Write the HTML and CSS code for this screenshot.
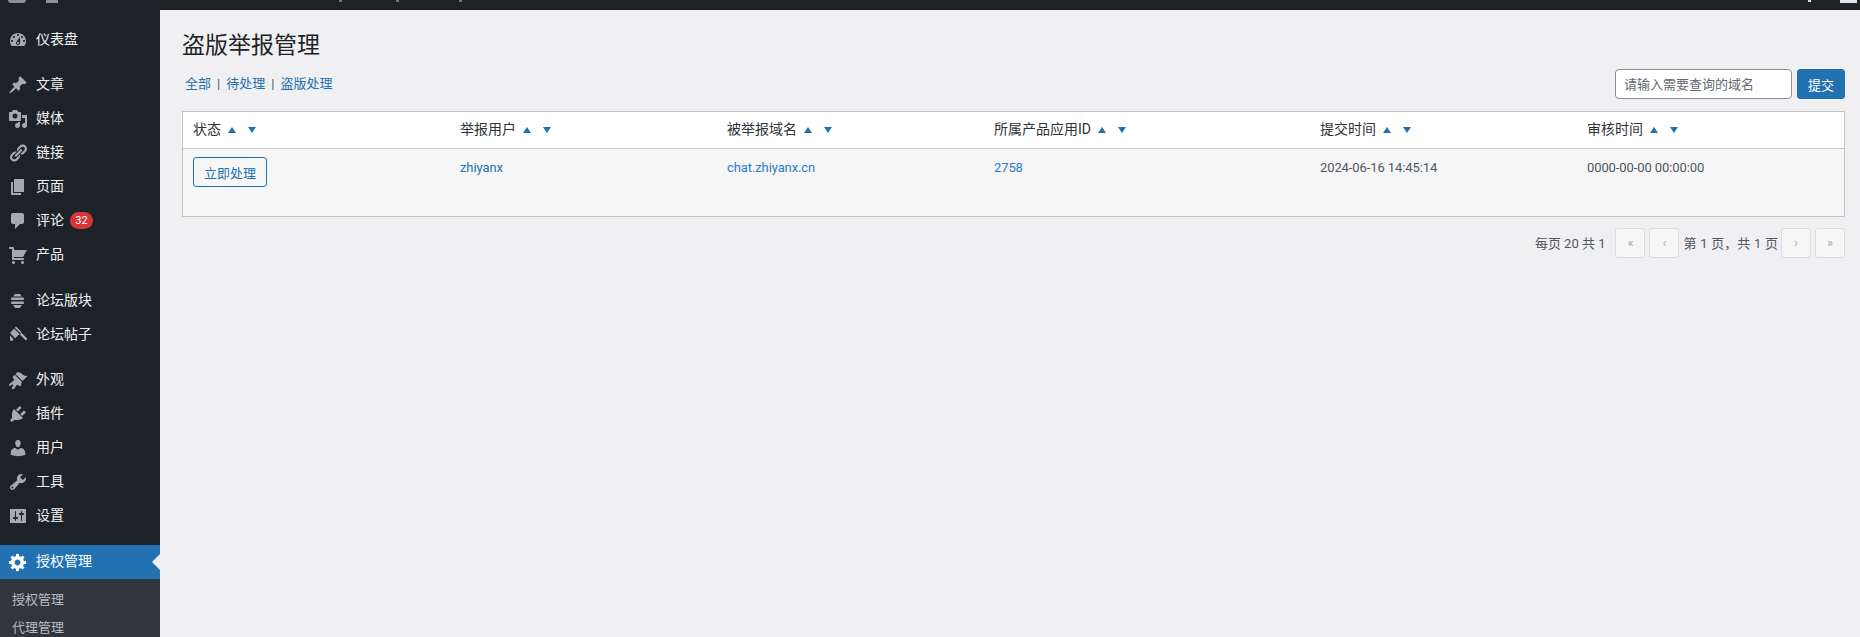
FILE: index.html
```html
<!DOCTYPE html>
<html lang="zh-CN">
<head>
<meta charset="utf-8">
<title>盗版举报管理</title>
<link rel="stylesheet" href="styles.css">
</head>
<body>
<div class="adminbar">
  <span class="bar-mark bar-logo"></span>
  <span class="bar-mark bar-home"></span>
  <span class="bar-mark bar-tick bar-a"></span>
  <span class="bar-mark bar-tick bar-b"></span>
  <span class="bar-mark bar-tick bar-c"></span>
  <span class="bar-spacer"></span>
  <span class="bar-mark bar-tick bar-d"></span>
  <span class="bar-mark bar-avatar"></span>
</div>
<div class="layout">
  <nav class="sidebar">
    <ul class="menu">
      <li class="item"><svg class="icon" viewBox="0 0 20 20"><path d="M3.76 16h12.48c1.1-1.37 1.76-3.11 1.76-5 0-4.42-3.58-8-8-8s-8 3.58-8 8c0 1.89.66 3.63 1.76 5zM10 4c.55 0 1 .45 1 1s-.45 1-1 1-1-.45-1-1 .45-1 1-1zM6 6c.55 0 1 .45 1 1s-.45 1-1 1-1-.45-1-1 .45-1 1-1zm8 0c.55 0 1 .45 1 1s-.45 1-1 1-1-.45-1-1 .45-1 1-1zm-5.37 5.55L12 7v6c0 1.1-.9 2-2 2s-2-.9-2-2c0-.57.24-1.08.63-1.45zM4 10c.55 0 1 .45 1 1s-.45 1-1 1-1-.45-1-1 .45-1 1-1zm12 0c.55 0 1 .45 1 1s-.45 1-1 1-1-.45-1-1 .45-1 1-1zm-5 3c0-.55-.45-1-1-1s-1 .45-1 1 .45 1 1 1 1-.45 1-1z" fill-rule="evenodd"/></svg><span>仪表盘</span></li>
      <li class="sep"></li>
      <li class="item"><svg class="icon" viewBox="0 0 20 20"><path d="M10.44 3.02l1.82-1.82 6.36 6.35-1.83 1.82c-1.05-.68-2.48-.57-3.41.36l-.75.75c-.92.93-1.04 2.35-.35 3.41l-1.83 1.82-2.41-2.41-2.8 2.79c-.42.42-3.38 2.71-3.8 2.29s1.86-3.39 2.28-3.81l2.79-2.79L4.1 9.36l1.83-1.82c1.05.69 2.48.57 3.4-.36l.75-.75c.93-.92 1.05-2.35.36-3.41z"/></svg><span>文章</span></li>
      <li class="item"><svg class="icon" viewBox="0 0 20 20"><path d="M13 11V4c0-.55-.45-1-1-1h-1.67L9 1H5L3.67 3H2c-.55 0-1 .45-1 1v7c0 .55.45 1 1 1h10c.55 0 1-.45 1-1zM7 4.5c1.38 0 2.5 1.12 2.5 2.5S8.38 9.5 7 9.5 4.5 8.38 4.5 7 5.62 4.5 7 4.5zM14 6h5v10.5c0 1.38-1.12 2.5-2.5 2.5S14 17.88 14 16.5s1.12-2.5 2.5-2.5c.17 0 .34.02.5.05V9h-3V6zm-4 8.05V13h2v3.5c0 1.38-1.12 2.5-2.5 2.5S7 17.88 7 16.5 8.12 14 9.5 14c.17 0 .34.02.5.05z" fill-rule="evenodd"/></svg><span>媒体</span></li>
      <li class="item"><svg class="icon" viewBox="0 0 20 20"><path d="M17.74 2.76c1.68 1.69 1.68 4.41 0 6.1l-1.53 1.52c-1.12 1.12-2.7 1.47-4.14 1.09l2.62-2.61.76-.77.76-.76c.84-.84.84-2.2 0-3.04-.84-.85-2.2-.85-3.04 0l-.77.76-3.38 3.38c-.37-1.44-.02-3.02 1.1-4.14l1.52-1.53c1.69-1.68 4.42-1.68 6.1 0zM8.59 13.43l5.34-5.34c.42-.42.42-1.1 0-1.52-.44-.43-1.13-.39-1.53 0l-5.33 5.34c-.42.42-.42 1.1 0 1.52.44.43 1.13.39 1.52 0zm-.76 2.29l4.14-4.15c.38 1.44.03 3.02-1.09 4.14l-1.52 1.53c-1.69 1.68-4.41 1.68-6.1 0-1.68-1.68-1.68-4.42 0-6.1l1.53-1.52c1.12-1.12 2.7-1.47 4.14-1.1l-4.14 4.15c-.85.84-.85 2.2 0 3.05.84.84 2.2.84 3.04 0z"/></svg><span>链接</span></li>
      <li class="item"><svg class="icon" viewBox="0 0 20 20"><path d="M6 15V2h10v13H6zm-1 1h8v2H3V5h2v11z"/></svg><span>页面</span></li>
      <li class="item"><svg class="icon" viewBox="0 0 20 20"><path d="M5 2h9c1.1 0 2 .9 2 2v7c0 1.1-.9 2-2 2h-2l-5 5v-5H5c-1.1 0-2-.9-2-2V4c0-1.1.9-2 2-2z"/></svg><span>评论</span><span class="badge">32</span></li>
      <li class="item"><svg class="icon" viewBox="0 0 20 20"><path d="M6 13h9c.55 0 1 .45 1 1s-.45 1-1 1H5c-.55 0-1-.45-1-1V4H2c-.55 0-1-.45-1-1s.45-1 1-1h3c.55 0 1 .45 1 1v2h13l-4 7H6v1zm-.5 3c.83 0 1.5.67 1.5 1.5S6.33 19 5.5 19 4 18.33 4 17.5 4.67 16 5.5 16zm9 0c.83 0 1.5.67 1.5 1.5s-.67 1.5-1.5 1.5-1.5-.67-1.5-1.5.67-1.5 1.5-1.5z"/></svg><span>产品</span></li>
      <li class="sep sep-wide"></li>
      <li class="item"><svg class="icon" viewBox="0 0 20 20"><path d="M7 3h5l2 2.500H5zM3.800 6.500h11.400c.5 0 .8.600.8 1.250S15.700 9 15.200 9H3.800C3.300 9 3 8.400 3 7.750S3.300 6.500 3.800 6.500zM3.800 10.500h11.400c.5 0 .8.600.8 1.250S15.700 13 15.200 13H3.800C3.300 13 3 12.400 3 11.750S3.300 10.500 3.800 10.500zM5 14h9l-2 3H7z"/></svg><span>论坛版块</span></li>
      <li class="item"><svg class="icon" viewBox="0 0 20 20"><path d="M8 1.500l5.500 5.500-1.200 1.200L6.800 2.700zM6 3.500l5.500 5.500-4.300 4.200L2 8zM11.800 9.500l1.700-1.700 5.200 5.300c.5.500.5 1.200 0 1.700s-1.200.5-1.700 0zM2 10.500l3.500 3.500L5 15.800H2.400L2 15z"/></svg><span>论坛帖子</span></li>
      <li class="sep"></li>
      <li class="item"><svg class="icon" viewBox="0 0 20 20"><path d="M14.480 11.060L7.410 3.990l1.500-1.500c.5-.56 2.300-.47 3.510.32 1.210.8 1.430 1.280 2.910 2.100 1.180.64 2.450 1.260 4.450.85zm-.71.71L6.700 4.700 4.930 6.470c-.39.39-.39 1.020 0 1.410l1.060 1.060c.39.39.39 1.030 0 1.420-.6.6-1.430 1.110-2.210 1.690-.35.26-.7.530-1.010.84C1.430 13.230.4 14.800 1.430 15.830c.41.410 1.020.39 1.410-.03.42-.42 1.280-1.760 1.640-1.410l1.060 1.060c.35.35-1.090 1.210-1.420 1.650-.39.55-.39 1.360.18 1.840.63.56 1.510.23 2.050-.4.69-.83.86-1.530 1.650-2.420l.89-1.100c.35-.35 1.030-.35 1.410 0L11.370 16c.39.39 1.030.39 1.420 0z"/></svg><span>外观</span></li>
      <li class="item"><svg class="icon" viewBox="0 0 20 20"><path d="M13.110 4.360L9.870 7.600 8 5.730l3.240-3.240c.35-.34 1.050-.2 1.560.32.52.51.66 1.210.31 1.550zm-8 1.770l.91-1.120 9.010 9.010-1.190.84c-.71.71-2.630 1.160-3.820 1.160H6.140L4.900 17.260c-.59.59-1.540.59-2.120 0-.59-.58-.59-1.530 0-2.120l1.240-1.240v-3.880c0-1.130.4-3.190 1.090-3.890zm7.260 3.970l3.240-3.240c.34-.35 1.040-.21 1.550.31.52.51.66 1.210.31 1.550l-3.240 3.250z"/></svg><span>插件</span></li>
      <li class="item"><svg class="icon" viewBox="0 0 20 20"><path d="M10 9.250c-2.270 0-2.730-3.440-2.730-3.440C7 4.020 7.820 2 9.970 2c2.160 0 2.980 2.020 2.710 3.810 0 0-.41 3.440-2.680 3.440zm0 2.570L12.720 10c2.390 0 4.520 2.330 4.520 4.530v2.490s-3.650 1.130-7.240 1.130c-3.650 0-7.240-1.130-7.240-1.130v-2.490c0-2.250 1.940-4.480 4.470-4.480z"/></svg><span>用户</span></li>
      <li class="item"><svg class="icon" viewBox="0 0 20 20"><path d="M16.680 9.770c-1.340 1.340-3.300 1.670-4.950.99l-5.410 6.520c-.99.99-2.590.99-3.580 0s-.99-2.590 0-3.570l6.520-5.420c-.68-1.650-.35-3.610.99-4.950 1.280-1.280 3.120-1.620 4.720-1.060l-2.890 2.890 2.820 2.820 2.860-2.870c.53 1.580.18 3.390-1.080 4.650zM3.810 16.210c.4.390 1.040.39 1.430 0 .4-.4.4-1.040 0-1.430-.39-.4-1.030-.4-1.430 0-.39.39-.39 1.030 0 1.430z" fill-rule="evenodd"/></svg><span>工具</span></li>
      <li class="item"><svg class="icon" viewBox="0 0 20 20"><path d="M18 16V4c0-.55-.45-1-1-1H3c-.55 0-1 .45-1 1v12c0 .55.45 1 1 1h14c.55 0 1-.45 1-1zM8 11h1c.55 0 1 .45 1 1s-.45 1-1 1H8v1.500c0 .28-.22.5-.5.5s-.5-.22-.5-.5V13H6c-.55 0-1-.45-1-1s.45-1 1-1h1V5.500c0-.28.22-.5.5-.5s.5.22.5.5V11zm5-2h-1c-.55 0-1-.45-1-1s.45-1 1-1h1V5.500c0-.28.22-.5.5-.5s.5.22.5.5V7h1c.55 0 1 .45 1 1s-.45 1-1 1h-1v5.500c0 .28-.22.5-.5.5s-.5-.22-.5-.5V9z" fill-rule="evenodd"/></svg><span>设置</span></li>
      <li class="sep sep-last"></li>
      <li class="item item-active"><svg class="icon" viewBox="0 0 20 20"><path d="M18 12h-2.180c-.17.7-.44 1.350-.81 1.930l1.540 1.540-2.100 2.100-1.540-1.540c-.58.36-1.230.63-1.910.79V19H8v-2.180c-.68-.16-1.330-.43-1.910-.79l-1.540 1.540-2.120-2.120 1.540-1.540c-.36-.58-.63-1.230-.79-1.910H1V9.030h2.170c.16-.7.44-1.350.8-1.940L2.430 5.550l2.100-2.100 1.540 1.540c.58-.37 1.240-.64 1.930-.81V2h3v2.180c.68.16 1.330.43 1.910.79l1.540-1.540 2.120 2.120-1.540 1.540c.36.59.64 1.240.8 1.940H18V12zm-8.500 1.500c1.660 0 3-1.340 3-3s-1.340-3-3-3-3 1.340-3 3 1.340 3 3 3z" fill-rule="evenodd"/></svg><span>授权管理</span><span class="active-arrow"></span></li>
      <li class="submenu">
        <a class="subitem">授权管理</a>
        <a class="subitem">代理管理</a>
      </li>
    </ul>
  </nav>
  <main class="main">
    <h1 class="title">盗版举报管理</h1>
    <div class="toolbar">
      <div class="filters">
        <a class="link">全部</a><span class="divider">|</span><a class="link">待处理</a><span class="divider">|</span><a class="link">盗版处理</a>
      </div>
      <form class="search">
        <input class="search-input" type="text" placeholder="请输入需要查询的域名">
        <button class="search-btn" type="button">提交</button>
      </form>
    </div>
    <table class="data">
      <colgroup>
        <col class="c1"><col class="c2"><col class="c3"><col class="c4"><col class="c5"><col class="c6">
      </colgroup>
      <thead>
        <tr>
          <th><span class="th-in">状态<i class="up"></i><i class="down"></i></span></th>
          <th><span class="th-in">举报用户<i class="up"></i><i class="down"></i></span></th>
          <th><span class="th-in">被举报域名<i class="up"></i><i class="down"></i></span></th>
          <th><span class="th-in">所属产品应用ID<i class="up"></i><i class="down"></i></span></th>
          <th><span class="th-in">提交时间<i class="up"></i><i class="down"></i></span></th>
          <th><span class="th-in">审核时间<i class="up"></i><i class="down"></i></span></th>
        </tr>
      </thead>
      <tbody>
        <tr>
          <td><button class="action" type="button">立即处理</button></td>
          <td><a class="link">zhiyanx</a></td>
          <td><a class="link link-bright">chat.zhiyanx.cn</a></td>
          <td><a class="link link-bright">2758</a></td>
          <td>2024-06-16 14:45:14</td>
          <td>0000-00-00 00:00:00</td>
        </tr>
      </tbody>
    </table>
    <div class="pager">
      <span class="pager-count">每页 20 共 1</span>
      <span class="page-btn">«</span>
      <span class="page-btn">‹</span>
      <span class="pager-info">第 1 页，共 1 页</span>
      <span class="page-btn">›</span>
      <span class="page-btn">»</span>
    </div>
  </main>
</div>
</body>
</html>
```
FILE: styles.css
```css
* { box-sizing: border-box; }
html, body { height: 100%; }
body {
  margin: 0;
  overflow: hidden;
  background: #f0f0f2;
  color: #3c434a;
  font: 13px/1.4 Roboto, "Noto Sans CJK SC", sans-serif;
}
.adminbar {
  height: 10px;
  background: #1d2327;
  display: flex;
  align-items: flex-start;
  overflow: hidden;
}
.bar-mark { display: block; background: #8c8f94; }
.bar-logo { width: 18px; height: 3px; margin-left: 8px; border-radius: 0 0 9px 9px; }
.bar-home { width: 12px; height: 3px; margin-left: 20px; }
.bar-tick { width: 3px; height: 2px; background: #6f7378; }
.bar-a { margin-left: 281px; }
.bar-b { margin-left: 54px; }
.bar-c { margin-left: 60px; }
.bar-spacer { flex: 1; }
.bar-d { background: #d8d8d8; margin-right: 29px; }
.bar-avatar { width: 17px; height: 3px; margin-right: 3px; background: #dce4ee; }

.layout { display: flex; height: 627px; }
.sidebar { width: 160px; flex: none; background: #1d2229; overflow: hidden; }
.menu { list-style: none; margin: 0; padding: 12px 0 0; }
.item {
  height: 34px;
  display: flex;
  align-items: center;
  padding: 1px 0 0 8px;
  color: #f0f0f1;
  font-size: 14px;
  position: relative;
}
.icon { width: 20px; height: 20px; flex: none; margin-right: 8px; fill: #a7aaad; }
.sep { height: 11px; }
.sep-wide { height: 12px; }
.sep-last { height: 13px; }
.badge {
  margin-left: 6px;
  min-width: 23px;
  height: 17px;
  border-radius: 9px;
  background: #d63638;
  color: #fff;
  font-size: 11px;
  line-height: 17px;
  text-align: center;
}
.item-active { background: #2271b1; color: #fff; padding-top: 0; }
.item-active .icon { fill: #fff; }
.active-arrow {
  position: absolute;
  right: 0;
  top: 9px;
  border: 8px solid transparent;
  border-left: 0;
  border-right-color: #f0f0f2;
}
.submenu { background: #32363c; padding: 7px 0 0; height: 80px; display: flex; flex-direction: column; }
.subitem { display: block; height: 28px; line-height: 28px; padding-left: 12px; color: #b8bbc0; font-size: 13px; }

.main { flex: 1; min-width: 0; padding: 21px 15px 0 22px; }
.title { margin: 0; font-size: 23px; font-weight: 400; line-height: 29px; color: #1d2327; }
.toolbar { display: flex; justify-content: space-between; align-items: center; height: 30px; margin-top: 9px; }
.filters { padding-left: 3px; display: flex; align-items: center; }
.link { color: #2271b1; text-decoration: none; }
.link-bright { color: #2a7ccc; }
.divider { margin: 0 6px; color: #50575e; }
.search { display: flex; gap: 5px; margin: 0; }
.search-input {
  width: 177px;
  height: 30px;
  padding: 0 8px;
  border: 1px solid #8c8f94;
  border-radius: 4px;
  background: #fff;
  font: 13px Roboto, "Noto Sans CJK SC", sans-serif;
  color: #2c3338;
}
.search-input::placeholder { color: #646970; opacity: 1; }
.search-btn {
  width: 48px;
  height: 30px;
  border: 1px solid #2271b1;
  border-radius: 3px;
  background: #2271b1;
  color: #fff;
  padding: 0;
  font: 13px Roboto, "Noto Sans CJK SC", sans-serif;
}
.data {
  width: 100%;
  margin-top: 12px;
  border: 1px solid #c3c4c7;
  border-collapse: separate;
  border-spacing: 0;
  table-layout: fixed;
}
.c1, .c2, .c3, .c5 { width: 267px; }
.c4 { width: 326px; }
.data th {
  height: 37px;
  padding: 0 10px;
  background: #fff;
  border-bottom: 1px solid #c3c4c7;
  font-weight: 400;
  font-size: 14px;
  text-align: left;
  color: #2c3338;
}
.th-in { display: flex; align-items: center; }
.up, .down { display: block; width: 0; height: 0; border-left: 4px solid transparent; border-right: 4px solid transparent; }
.up { margin-left: 7px; border-bottom: 6px solid #2271b1; }
.down { margin-left: 12px; border-top: 6px solid #2271b1; }
.data td {
  height: 67px;
  padding: 9px 10px 0;
  background: #f6f6f7;
  vertical-align: top;
  color: #50575e;
  line-height: 20px;
  letter-spacing: -0.1px;
}
.data td:first-child { padding-top: 8px; }
.action {
  display: block;
  width: 74px;
  height: 30px;
  border: 1px solid #2271b1;
  border-radius: 3px;
  background: #f6f6f7;
  color: #2271b1;
  padding: 0;
  font: 13px Roboto, "Noto Sans CJK SC", sans-serif;
}
.pager { display: flex; justify-content: flex-end; align-items: center; height: 30px; margin-top: 11px; color: #50575e; }
.pager-count { margin-right: 10px; padding-top: 2px; }
.page-btn {
  width: 30px;
  height: 30px;
  display: flex;
  align-items: center;
  justify-content: center;
  margin-right: 4px;
  border: 1px solid #dcdcde;
  border-radius: 3px;
  background: #f6f6f7;
  color: #a7aaad;
}
.page-btn:last-child { margin-right: 0; }
.pager-info { margin: 0 3px 0 0; word-spacing: 0.5px; padding-top: 2px; }
```
